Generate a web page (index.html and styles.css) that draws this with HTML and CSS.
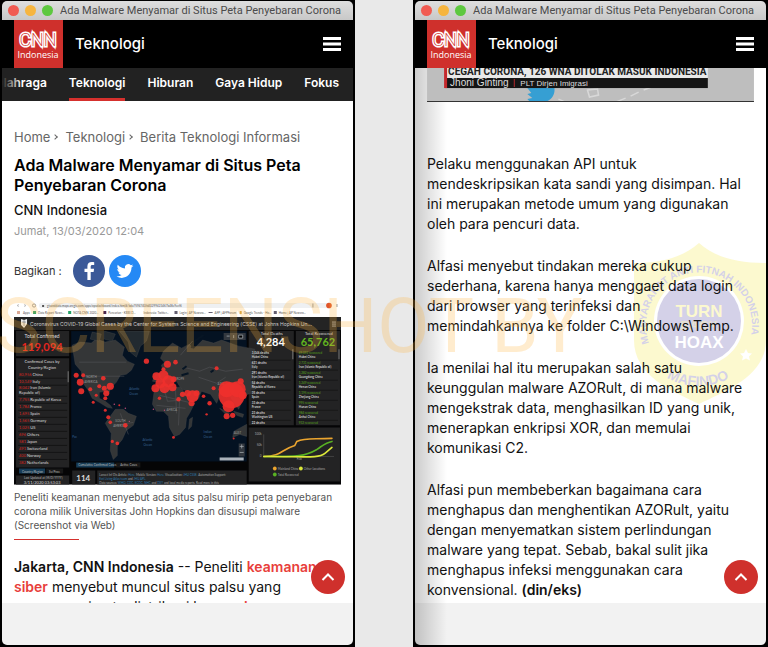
FILE: index.html
```html
<!DOCTYPE html>
<html lang="id">
<head>
<meta charset="utf-8">
<meta name="viewport" content="width=device-width, initial-scale=1">
<title>Ada Malware Menyamar di Situs Peta Penyebaran Corona</title>
<link rel="stylesheet" href="styles.css">
</head>
<body>
<main class="desk">
  <section class="window">
    <div class="titlebar"><span class="dot close"></span><span class="dot mini"></span><span class="dot full"></span><span class="caption">Ada Malware Menyamar di Situs Peta Penyebaran Corona</span></div>
    <header class="masthead">
      <a class="logo" href="#" aria-label="CNN Indonesia">
        <svg viewBox="0 0 49 48"><text class="logo-mark" x="24" y="26">CNN</text><text class="logo-sub" x="24" y="38">Indonesia</text></svg>
      </a>
      <span class="channel">Teknologi</span>
      <button class="menu" aria-label="Menu"><svg viewBox="0 0 18 14"><path d="M0 1.5h18M0 7h18M0 12.5h18"/></svg></button>
    </header>
    <nav class="tabs">
      <a href="#">Olahraga</a><a href="#" class="active">Teknologi</a><a href="#">Hiburan</a><a href="#">Gaya Hidup</a><a href="#">Fokus</a>
    </nav>
    <div class="viewport">
      <article class="story">
        <div class="crumbs"><a href="#">Home</a><i></i><a href="#">Teknologi</a><i></i><a href="#">Berita Teknologi Informasi</a></div>
        <h1>Ada Malware Menyamar di Situs Peta Penyebaran Corona</h1>
        <p class="author">CNN Indonesia</p>
        <p class="date">Jumat, 13/03/2020 12:04</p>
        <div class="share"><span>Bagikan :</span>
          <a href="#" class="fb" aria-label="Facebook"><svg viewBox="0 0 32 32"><path d="M17.7 25v-8h2.9l.5-3.3h-3.4v-2c0-1 .4-1.7 1.8-1.7h1.7V7.200c-.5-.1-1.4-.2-2.400-.2-2.700 0-4.400 1.500-4.400 4.300v2.400h-2.900V17h2.900v8z"/></svg></a>
          <a href="#" class="tw" aria-label="Twitter"><svg viewBox="0 0 32 32"><path d="M24.500 10.800c-.6.300-1.300.5-2 .6.700-.4 1.200-1.100 1.500-1.900-.7.400-1.400.7-2.200.8a3.450 3.450 0 0 0-5.900 3.100c-2.900-.1-5.400-1.500-7.100-3.600-.9 1.600-.5 3.600 1.100 4.600-.6 0-1.100-.2-1.600-.4 0 1.700 1.200 3.100 2.800 3.400-.5.100-1 .2-1.600.1.400 1.400 1.700 2.400 3.200 2.400-1.400 1.100-3.200 1.600-5.100 1.400 6.600 4.200 14.800-.3 14.900-8.700.8-.5 1.500-1.200 2-1.800z"/></svg></a>
        </div>
        <figure>
          <svg class="shot" viewBox="0 0 326 182" role="img" aria-label="Peta sebaran COVID-19 Johns Hopkins">
            <rect width="326" height="182" fill="#fff"/>
            <rect x="25" y="1" width="292" height="5" rx="2" fill="#eef0f2"/>
            <g class="t3" fill="#555">
              <path d="M5 2.500l-2 1 2 1M10 2.500l2 1-2 1" stroke="#aaa" fill="none" stroke-width=".7"/><circle cx="20" cy="3.500" r="1.600" stroke="#777" fill="none" stroke-width=".7"/><path d="M28 3h2v2h-2z"/>
              <text x="33" y="5">gisanddata.maps.arcgis.com/apps/opsdashboard/index.html#/bda7594740fd40299423467b48e9ecf6</text>
              <circle cx="314" cy="3.500" r="2.800" fill="#e0552a"/><path d="M298 1.500v4M322 2v3" stroke="#999"/>
              <text x="9" y="12">Apps</text><text x="24" y="12">Data Report News...</text><text x="59" y="12">NOTA CNN 2020...</text><text x="94" y="12">Pencarian - KBBI D...</text><text x="129" y="12">Indonesia: Twitter...</text><text x="165" y="12">Login | AP Newsro...</text><text x="200" y="12">AFP | AFPForum</text><text x="229" y="12">Google Trends - Ho...</text><text x="264" y="12">Home | AP Newsro...</text>
            </g>
            <path d="M19 9h3v3h-3zM54 9h3v3h-3z" fill="#24a268"/><path d="M89 9h3v3h-3z" fill="#4b264d"/><path d="M160 9h3v3h-3zM259 9h3v3h-3zM194 10h4v1h-4z" fill="#635e70"/><path d="M3 9h3v3H3z" fill="#dba894"/><path d="M225 9h2v3h-2z" fill="#d6a649"/>
            <rect y="15" width="326" height="167" fill="#050506"/>
            <rect y="15" width="326" height="13" fill="#242424"/>
            <path d="M7 17l3 1 3-1 0 5-3 4-3-3z" fill="#eee"/><path d="M8 20h4M10 18v6" stroke="#777" stroke-width=".7"/>
            <text x="16" y="24" class="head">Coronavirus COVID-19 Global Cases by the Center for Systems Science and Engineering (CSSE) at Johns Hopkins Un...</text>
            <path d="M317 20h4M317 22h4M317 24h4" stroke="#ccc" stroke-width=".7"/>
            <g fill="#232324"><path d="M2 29h53v25H2zM2 56h53v109H2zM2 173h53v9H2zM58 168h23v14H58zM83 168h149v14H83zM234 29h45v94h-45zM281 29h44v94h-44zM234 125h91v54h-91z"/></g>
            <text x="28" y="36" class="lab">Total Confirmed</text><text x="28" y="49" class="num red">119,094</text>
            <text x="28" y="61" class="lab s">Confirmed Cases by</text><text x="28" y="67" class="lab s">Country/Region</text>
            <g class="t4" fill="#ddd">
              <text x="5" y="74"><tspan>80,956</tspan> China</text><text x="5" y="81"><tspan>10,149</tspan> Italy</text><text x="5" y="87"><tspan>8,042</tspan> Iran (Islamic</text><text x="5" y="92">Republic of)</text><text x="5" y="99"><tspan>7,755</tspan> Republic of Korea</text><text x="5" y="106"><tspan>1,784</tspan> France</text><text x="5" y="113"><tspan>1,695</tspan> Spain</text><text x="5" y="120"><tspan>1,565</tspan> Germany</text><text x="5" y="127"><tspan>1,025</tspan> US</text><text x="5" y="134"><tspan>696</tspan> Others</text><text x="5" y="141"><tspan>581</tspan> Japan</text><text x="5" y="148"><tspan>491</tspan> Switzerland</text><text x="5" y="155"><tspan>400</tspan> Norway</text><text x="5" y="162"><tspan>382</tspan> Netherlands</text>
            </g>
            <path d="M4 76h49M4 83h49M4 94h49M4 101h49M4 108h49M4 115h49M4 122h49M4 129h49M4 136h49M4 143h49M4 150h49M4 157h49" stroke="#111" stroke-width=".8"/><path d="M54 69v11M278 47v10M324 47v10" stroke="#777"/>
            <path d="M5 166h26v5H5zM62 160h38v5H62z" fill="#173c56"/><path d="M32 166h17v5H32zM101 160h25v5h-25z" fill="#171717"/>
            <g class="t3" fill="#bbb"><text x="8" y="170">Country/Region</text><text x="35" y="170">Sv/Prov.</text><text x="64" y="164">Cumulative Confirmed Cases</text><text x="106" y="164">Active Cases</text><text x="10" y="176">Last Updated at (M/D/YYYY)</text></g>
            <text x="28" y="181" class="lab s">3/11/2020 03:53:03</text><text x="69" y="178" class="n2">114</text>
            <g class="t3 notes" fill="#aaa"><text x="85" y="173">Lancet Inf Dis Article: <tspan>Here.</tspan> Mobile Version: <tspan>Here.</tspan> Visualization: <tspan>JHU CSSE.</tspan> Automation Support:</text><text x="85" y="177"><tspan>Esri Living Atlas team</tspan> and <tspan>JHU APL.</tspan></text><text x="85" y="181">Data sources: <tspan>WHO, CDC, ECDC, NHC</tspan> and <tspan>DXY</tspan> and local media reports. Read more in this</text></g>
            <rect x="57" y="29" width="175" height="130" fill="#041222"/>
            <g fill="#343637" stroke="#454748" stroke-width=".4">
              <path d="M58 43l8-3 11 1 5-4 9 3 10-2 9 7-2 8 5 6 7 3-3 6-5 4-6 1-4 7-5 5-3 7-3-3-6 1 0 6 6 3 5 4 2 3-5-1-8-5-7-4-4-8-5-7-2-12-6-7z"/><path d="M101 107l8 0 5 4 8 3-3 9-7 5-4 9-5 6 0 10-4 4-3-9 1-17-6-10z"/>
              <path d="M105 29h30l-3 10-6 5-4 11-6-5-2-10zM78 30l9 2-2 7-9-2zM90 29l11 3-3 7-8-2z" fill="#222a30"/>
              <path d="M138 79l3-7 8-2-2-7 3-3-4-4 3-7 9-8 9 5 8-4 4 5 9-9 11 3 8-3 17 6 16 3v43l-7 2-5 5-4 10-5-7-4-7-9-2-4 10-6-9-9-3-3 7-8 4-2-11-7-2-5-8-8-2-8 3z"/>
              <path d="M140 87l9-4 10 2 7 0 7 9 2 7 5 0-5 10-3 5-1 9-6 7-5 2-5-9-1-11-5-5-7 0-4-7z"/><path d="M175 117l3-2-1 9-3 3zM219 129l13-7v12l-7-2-7 3zM205 106l10 5-3 2zM219 109l10 3-1 3-6-2z"/>
            </g>
            <path d="M65 60h47M70 74h40M145 93l29 7M149 84l4 15 12-1-1 25M161 86l1 25M142 103l29 3M106 111l8 21M101 123l18-3M169 65l16 4 10-4 16 4 17-2M166 53l12-14M184 75l18 6 9-6" fill="none" stroke="#59595d" stroke-width=".5"/>
            <path d="M177 46l3-7 9-6M168 67l4-3M167 73l7-2M196 70l3-2" stroke="#071524" stroke-width="2" fill="none"/>
            <g class="geo"><text x="72" y="76">NORTH</text><text x="70" y="81">AMERICA</text><text x="101" y="120">SOUTH</text><text x="99" y="125">AMERICA</text><text x="152" y="109">AFRICA</text><text x="158" y="78">EUROPE</text><text x="203" y="83">ASIA</text><text x="219" y="132">AUST</text></g>
            <g class="t3" fill="#396391"><text x="115" y="88">Atlantic</text><text x="115" y="93">Ocean</text><text x="128" y="139">Atlantic</text><text x="129" y="144">Ocean</text><text x="189" y="131">Indian</text><text x="189" y="136">Ocean</text><text x="58" y="136">Pac</text></g>
            <g fill="#ef302d" fill-opacity=".92">
              <circle cx="62" cy="73" r="2.500"/><circle cx="69" cy="73" r="2"/><circle cx="66" cy="80" r="3.400"/><circle cx="67" cy="89" r="3"/><circle cx="76" cy="87" r="2"/><circle cx="89" cy="76" r="2.300"/><circle cx="85" cy="84" r="2"/><circle cx="90" cy="86" r="2.500"/><circle cx="96" cy="84" r="3.600"/><circle cx="92" cy="91" r="3"/><circle cx="82" cy="93" r="1.500"/><circle cx="79" cy="100" r="1.500"/><circle cx="91" cy="96" r="2"/><circle cx="91" cy="108" r="1.500"/><circle cx="94" cy="115" r="2"/><circle cx="96" cy="120" r="1.800"/><circle cx="111" cy="123" r="2.300"/><circle cx="98" cy="139" r="1.600"/><circle cx="103" cy="141" r="1.800"/><circle cx="105" cy="103" r="1"/>
              <circle cx="132" cy="59" r="2.600"/><circle cx="153" cy="62" r="3.500"/><circle cx="161" cy="60" r="2.300"/><circle cx="149" cy="67" r="2"/><circle cx="142" cy="74" r="4"/><circle cx="149" cy="73" r="5"/><circle cx="146" cy="81" r="5"/><circle cx="154" cy="79" r="6"/><circle cx="141" cy="86" r="4"/><circle cx="150" cy="86" r="5"/><circle cx="158" cy="85" r="4"/><circle cx="159" cy="77" r="3"/><circle cx="145" cy="96" r="1.700"/><circle cx="164" cy="97" r="2.200"/><circle cx="168" cy="92" r="2.600"/><circle cx="173" cy="91" r="3.200"/><circle cx="178" cy="94" r="6"/><circle cx="182" cy="91" r="3"/><circle cx="177" cy="101" r="3"/><circle cx="189" cy="94" r="1.800"/><circle cx="195" cy="101" r="2.200"/><circle cx="202" cy="66" r="2"/><circle cx="199" cy="86" r="2"/><circle cx="192" cy="112" r="1.200"/><circle cx="159" cy="135" r="1.400"/>
              <circle cx="217" cy="93" r="13"/><circle cx="212" cy="87" r="8"/><circle cx="223" cy="87" r="8"/><circle cx="226" cy="79" r="3"/><circle cx="228" cy="93" r="4"/><circle cx="214" cy="104" r="6"/><circle cx="212" cy="114" r="3"/><circle cx="218" cy="113" r="2.600"/><circle cx="219" cy="136" r="1"/>
            </g>
            <g fill="#b34a75"><circle cx="100" cy="102" r=".8"/><circle cx="111" cy="106" r=".8"/><circle cx="139" cy="107" r=".8"/><circle cx="150" cy="108" r=".7"/><circle cx="115" cy="119" r=".7"/></g>
            <path d="M209 31h22v7h-22zM224 141h6v13h-6z" fill="#33383f"/><path d="M212 34h3M219 33v3M224 33h4v3h-4zM225 144h4M227 142v4M225 150h4" stroke="#a1a7ad" stroke-width=".8"/><path d="M205 155h24v3h-24z" fill="#aab2ba"/>
            <text x="257" y="33" class="lab s">Total Deaths</text><text x="256" y="44" class="num">4,284</text><text x="304" y="33" class="lab s">Total Recovered</text><text x="303" y="44" class="num green">65,762</text>
            <g class="t3 bold" fill="#ccc"><text x="237" y="52">3,046 deaths</text><text x="237" y="56">Hubei China</text><text x="237" y="62">631 deaths</text><text x="237" y="66">Italy</text><text x="237" y="72">291 deaths</text><text x="237" y="76">Iran (Islamic Republic of)</text><text x="237" y="82">54 deaths</text><text x="237" y="86">Republic of Korea</text><text x="237" y="92">35 deaths</text><text x="237" y="96">Spain</text><text x="237" y="102">33 deaths</text><text x="237" y="106">France</text><text x="237" y="112">23 deaths</text><text x="237" y="116">Washington US</text><text x="237" y="122">22 deaths</text>
            <text x="284" y="56">Hubei China</text><text x="284" y="66">Iran (Islamic Republic of)</text><text x="284" y="76">Guangdong China</text><text x="284" y="86">Henan China</text><text x="284" y="96">Zhejiang China</text><text x="284" y="106">Hunan China</text><text x="284" y="116">Anhui China</text></g>
            <g class="t3" fill="#58a51b"><text x="284" y="52">49,092 recovered</text><text x="284" y="62">2,731 recovered</text><text x="284" y="72">1,282 recovered</text><text x="284" y="82">1,249 recovered</text><text x="284" y="92">1,195 recovered</text><text x="284" y="102">995 recovered</text><text x="284" y="112">984 recovered</text><text x="284" y="122">932 recovered</text></g>
            <path d="M236 58h40M236 68h40M236 78h40M236 88h40M236 98h40M236 108h40M236 118h40M283 58h40M283 68h40M283 78h40M283 88h40M283 98h40M283 108h40M283 118h40" stroke="#111" stroke-width=".6"/>
            <path d="M249 132v22h70" stroke="#555" stroke-width=".6" fill="none"/>
            <g fill="none" stroke-width="1.600" stroke-linecap="round"><path d="M249 154c18 0 17-7 31-11l2-4c8-4 16-2 35-3" stroke="#eba52f"/><path d="M249 154c35 0 41 0 53-7 6-4 9-7 15-8" stroke="#59b223"/><path d="M249 154c43 0 55 2 61-3l7-6" stroke="#dbe83a"/></g>
            <g class="t3" fill="#aaa"><text x="240" y="133">100k</text><text x="242" y="144">50k</text><text x="245" y="155">0</text><text x="282" y="158">Feb</text><text x="263" y="167">Mainland China</text><text x="289" y="167">Other Locations</text><text x="263" y="173">Total Recovered</text></g><circle cx="260" cy="166" r="1.900" fill="#eba52f"/><circle cx="286" cy="166" r="1.900" fill="#dbe83a"/><circle cx="260" cy="172" r="1.900" fill="#59b223"/>
          </svg>
          <figcaption>Peneliti keamanan menyebut ada situs palsu mirip peta penyebaran corona milik Universitas John Hopkins dan disusupi malware (Screenshot via Web)</figcaption>
        </figure>
        <hr>
        <p class="body"><strong>Jakarta, CNN Indonesia</strong> -- Peneliti <a href="#">keamanan siber</a> menyebut muncul situs palsu yang menyerupai peta distribusi kasus <a href="#">virus</a></p>
      </article>
      <button class="top" aria-label="Ke atas"><svg viewBox="0 0 34 34"><path d="M11.500 20l5.500-5.500 5.500 5.500"/></svg></button>
    </div>
    <div class="bottom"></div>
  </section>

  <section class="window second">
    <div class="titlebar"><span class="dot close"></span><span class="dot mini"></span><span class="dot full"></span><span class="caption">Ada Malware Menyamar di Situs Peta Penyebaran Corona</span></div>
    <header class="masthead">
      <a class="logo" href="#" aria-label="CNN Indonesia">
        <svg viewBox="0 0 49 48"><text class="logo-mark" x="24" y="26">CNN</text><text class="logo-sub" x="24" y="38">Indonesia</text></svg>
      </a>
      <span class="channel">Teknologi</span>
      <button class="menu" aria-label="Menu"><svg viewBox="0 0 18 14"><path d="M0 1.500h18M0 7h18M0 12.500h18"/></svg></button>
    </header>
    <div class="viewport">
      <svg class="shield" viewBox="0 0 132 162" aria-hidden="true">
        <path d="M65 0C48 15 26 20 0 20v77c0 36 38 51 65 64 27-13 67-28 67-64V20C104 20 82 15 65 0z" fill="#f7ec62"/>
        <circle cx="65" cy="78" r="45" fill="#fff"/><circle cx="65" cy="78" r="42" fill="#7269b5"/>
        <path id="arc-top" d="M15 100A53 53 0 1 1 115 100" fill="none"/><path id="arc-low" d="M26 130A64 64 0 0 0 108 126" fill="none"/>
        <text class="ring"><textPath href="#arc-top">MASYARAKAT ANTI FITNAH INDONESIA</textPath></text>
        <text class="ring low"><textPath href="#arc-low" startOffset="8">MAFINDO</textPath></text>
        <path d="M112 106l2 4 4 .5-3 3 1 4-4-2-4 2 1-4-3-3 4-.5z" fill="#fff"/>
        <text x="65" y="74" class="tbh y">TURN</text><text x="65" y="87" class="tbh mid">BACK</text><text x="65" y="105" class="tbh">HOAX</text>
      </svg>
      <article class="story continued">
        <svg class="video" viewBox="0 0 326 34" role="img" aria-label="Cuplikan video">
          <rect width="326" height="34" fill="#bebebe"/>
          <path d="M100 20c2 0 3-1 4 0h23c1 6-3 13-11 14h-13l-3-3 5-1-5-4 4-1z" fill="#369fd3"/>
          <path d="M131 31l7 3M188 34l10-4M203 28l8-4M216 22l8-3" stroke="#d8d8d8" stroke-width="1.500"/><path d="M160 22l10-1 1 6-9 2z" fill="none" stroke="#d8d8d8" stroke-width="1.500"/>
          <rect x="18" width="262" height="10" fill="#e9e9e9"/><rect x="18" y="10" width="262" height="10" fill="#151515"/><rect x="17" width="3" height="20" fill="#c4282c"/>
          <text x="21" y="7" class="chyron">CEGAH CORONA, 126 WNA DITOLAK MASUK INDONESIA</text>
          <text x="23" y="18" class="name">Jhoni Ginting</text><path d="M87 11v8" stroke="#b3282c"/><text x="93" y="18" class="role">PLT Dirjen Imigrasi</text>
          <path d="M0 33.500h326" stroke="#333"/>
        </svg>
        <p class="body">Pelaku menggunakan API untuk mendeskripsikan kata sandi yang disimpan. Hal ini merupakan metode umum yang digunakan oleh para pencuri data.</p>
        <p class="body">Alfasi menyebut tindakan mereka cukup sederhana, karena hanya menggaet data login dari browser yang terinfeksi dan memindahkannya ke folder C:\Windows\Temp.</p>
        <p class="body">Ia menilai hal itu merupakan salah satu keunggulan malware AZORult, di mana malware mengekstrak data, menghasilkan ID yang unik, menerapkan enkripsi XOR, dan memulai komunikasi C2.</p>
        <p class="body">Alfasi pun membeberkan bagaimana cara menghapus dan menghentikan AZORult, yaitu dengan menyematkan sistem perlindungan malware yang tepat. Sebab, bakal sulit jika menghapus infeksi menggunakan cara konvensional. <strong>(din/eks)</strong></p>
      </article>
      <button class="top" aria-label="Ke atas"><svg viewBox="0 0 34 34"><path d="M11.500 20l5.500-5.500 5.500 5.500"/></svg></button>
    </div>
    <div class="bottom"></div>
  </section>
  <div class="watermark">SCREENSHOT BY</div>
</main>
</body>
</html>
```

FILE: styles.css
```css
* { box-sizing: border-box; }
body { margin: 0; background: #e9e9e9; font-family: Inter, "Liberation Sans", sans-serif; color: #111; }
h1, p, figure { margin: 0; }
a { color: inherit; text-decoration: none; }
button { border: 0; padding: 0; background: none; }
svg { display: block; }

.desk { position: relative; display: grid; grid-template-columns: 1fr 1fr; gap: 58px; height: 100vh; overflow: hidden; }
.window { display: flex; flex-direction: column; min-width: 0; min-height: 0; padding: 1px 2px 2px; background: #000; }
.titlebar { display: flex; align-items: center; height: 19px; flex: none; padding-left: 6px; border-radius: 5px 5px 0 0; background: linear-gradient(#dedede, #c8c8c8); overflow: hidden; }
.dot { width: 11px; height: 11px; margin-right: 6px; border-radius: 50%; flex: none; }
.close { background: #f15b52; }
.mini { background: #f6b53f; }
.full { background: #5dc83f; }
.caption { margin-left: 1px; font: 11px/18px Roboto, sans-serif; color: #4b4b4b; white-space: nowrap; }

.masthead { display: flex; align-items: center; flex: none; height: 48px; padding: 0 12px; background: #000; color: #fff; }
.logo { width: 49px; height: 48px; background: #cf302c; }
.logo-mark { font: 200 18px Roboto, sans-serif; fill: #cf302c; stroke: #fff; stroke-width: 3px; paint-order: stroke; text-anchor: middle; }
.logo-sub { font: 9px "Open Sans", sans-serif; fill: #fff; text-anchor: middle; }
.channel { flex: 1; margin-left: 12px; font-size: 15px; font-weight: 500; line-height: 20px; }
.menu { width: 18px; height: 14px; }
.menu path { stroke: #fff; stroke-width: 3; fill: none; }

.tabs { position: relative; display: flex; justify-content: flex-end; gap: 22px; flex: none; height: 33px; padding-right: 14px; overflow: hidden; background: #222; color: #fff; font-size: 12px; font-weight: 600; line-height: 29px; white-space: nowrap; }
.tabs::before { content: ""; position: absolute; inset: 0 auto 0 0; width: 20px; background: linear-gradient(90deg, #222, transparent); }
.active { border-bottom: 3px solid #d5302d; }

.viewport { position: relative; flex: 1; min-height: 0; overflow: hidden; background: #fff; }
.bottom { flex: none; height: 42px; background: #f2f2f2; border-radius: 0 0 5px 5px; }
.story { position: relative; padding: 28px 12px 0; }
.crumbs { display: flex; align-items: center; font-size: 13px; line-height: 16px; color: #666; }
.crumbs i { width: 4px; height: 4px; margin: 0 8px 0 3px; border: solid #666; border-width: 1px 1px 0 0; transform: rotate(45deg); }
h1 { margin-top: 10px; font-size: 16px; font-weight: 600; line-height: 20px; color: #000; }
.author { margin-top: 7px; font-size: 13px; font-weight: 500; line-height: 16px; }
.date { margin-top: 5px; font-size: 11px; line-height: 16px; color: #999; }
.share { display: flex; align-items: center; gap: 4px; margin-top: 16px; font-size: 11px; color: #333; }
.share span { margin-right: 7px; }
.share a { width: 32px; height: 32px; border-radius: 50%; }
.share path { fill: #fff; }
.fb { background: #3b5998; }
.tw { background: #2589f5; }
figure { margin-top: 15px; }
figcaption { margin-top: 5px; font-size: 10px; line-height: 14px; color: #555; }
hr { width: 65px; height: 1px; margin: 7px 0 17px; border: 0; background: #d5302d; }
.body { padding-right: 5px; font-size: 14px; line-height: 20px; }
.body a { color: #e83e3b; font-weight: 600; }
.body strong { font-weight: 600; }
.top { position: absolute; right: 8px; bottom: 9px; width: 34px; height: 34px; border-radius: 50%; background: #cf302c; }
.top path { fill: none; stroke: #fff; stroke-width: 2; }

.continued { display: grid; gap: 22px; padding-top: 0; }
.video { width: 100%; margin-bottom: 30px; }
.second .viewport::before, .second .bottom { background-image: linear-gradient(90deg, #0003, transparent 32px); }
.second .viewport::before { content: ""; position: absolute; inset: 0; }
.shield { position: absolute; top: 175px; right: 0; width: 132px; opacity: .3; }
.ring { font: bold 10px "Liberation Sans", sans-serif; fill: #7269b5; }
.low { font-size: 14px; }
.tbh { font: bold 17px "Liberation Sans", sans-serif; fill: #fff; text-anchor: middle; }
.tbh.y { fill: #f7ec62; }
.tbh.mid { fill: #b3a663; font-size: 13px; }
.chyron { font: bold 10px Roboto, sans-serif; fill: #222; }
.name { font: 10px "Liberation Sans", sans-serif; fill: #ddd; }
.role { font: 8px "Liberation Sans", sans-serif; fill: #ddd; }

.shot { width: 100%; font-family: Lato, sans-serif; }
.head { font-family: Inter, sans-serif; font-size: 5px; fill: #ccc; }
.lab { font-size: 5px; fill: #ddd; text-anchor: middle; }
.lab.s { font-size: 4px; }
.num { font-size: 11px; font-weight: bold; fill: #fff; text-anchor: middle; }
.num.red { fill: #e4261f; }
.num.green { fill: #62b51f; }
.n2 { font-size: 8px; font-weight: bold; fill: #ddd; text-anchor: middle; }
.t4 { font-size: 4px; }
.t4 tspan { fill: #d3241f; }
.notes tspan { fill: #2d7ab0; }
.t3 { font-size: 3px; }
.bold { font-weight: bold; }
.geo { font-size: 3px; fill: #999; }

.watermark { position: absolute; left: -4px; top: 280px; font: 76px/92px Roboto, sans-serif; color: #ffb23a40; white-space: nowrap; pointer-events: none; }
```
